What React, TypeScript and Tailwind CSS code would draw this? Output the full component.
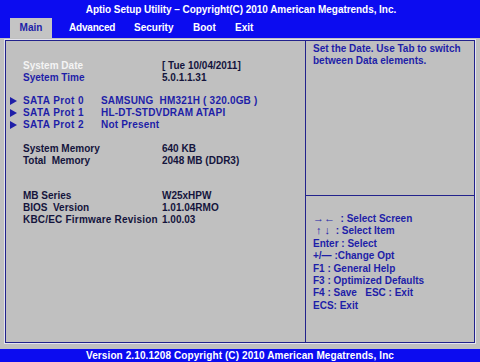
import React from "react";

const Arrow = () => (
  <svg width="7" height="8" viewBox="0 0 7 8" className="absolute left-[-13px] top-[2px]">
    <polygon points="0,0 7,4 0,8" fill="#1e1ea8" />
  </svg>
);

export default function App() {
  const font = { fontFamily: '"Liberation Sans", Arial, sans-serif' };
  const blue = "text-[#1e1ea8]";
  const dark = "text-[#14143c]";
  return (
    <div
      className="w-[480px] h-[362px] bg-[#c0c0c0] flex flex-col font-bold text-[10px] leading-[12px] overflow-hidden"
      style={font}
    >
      {/* Header */}
      <div className="h-[38px] bg-[#0c0cf0] flex flex-col text-white">
        <div className="h-[18px] flex items-center justify-center pt-[1px] text-[10px] tracking-[-0.05px] pl-[2px]">
          Aptio Setup Utility – Copyright(C) 2010 American Megatrends, Inc.
        </div>
        <div className="flex-1 flex items-stretch text-[10px]">
          <div className="ml-[10px] w-[42px] bg-[#c4c4c4] text-[#1e1ea8] flex items-center justify-center">
            Main
          </div>
          <div className="ml-[17px] w-[65px] flex items-center tracking-[-0.2px]">Advanced</div>
          <div className="w-[59px] flex items-center">Security</div>
          <div className="w-[42px] flex items-center">Boot</div>
          <div className="flex items-center">Exit</div>
        </div>
      </div>

      {/* Main area */}
      <div className="flex-1 px-[5px] pt-[2px] pb-[6px] flex">
        <div className="flex-1 flex border border-[#22228c] shadow-[0_0_0_1px_#e4e4ee]">
          {/* Left panel */}
          <div className="w-[300px] border-r border-[#22228c] pl-[17px] pt-[19px]">
            <div className="flex">
              <div className="w-[139px] text-[#f4f4f4]">System Date</div>
              <div className={dark}>[ Tue 10/04/2011]</div>
            </div>
            <div className="flex">
              <div className={`w-[139px] ${blue}`}>Syetem Time</div>
              <div className={dark}>5.0.1.1.31</div>
            </div>

            <div className="mt-[11px]">
              {[
                ["SATA Prot 0", "SAMSUNG  HM321H ( 320.0GB )"],
                ["SATA Prot 1", "HL-DT-STDVDRAM ATAPI"],
                ["SATA Prot 2", "Not Present"],
              ].map(([a, b]) => (
                <div key={a} className={`flex relative ${blue}`}>
                  <Arrow />
                  <div className="w-[78px] tracking-[0.4px]">{a}</div>
                  <div className="whitespace-pre tracking-[0.2px]">{b}</div>
                </div>
              ))}
            </div>

            <div className={`mt-[12px] ${dark}`}>
              <div className="flex">
                <div className="w-[139px]">System Memory</div>
                <div>640 KB</div>
              </div>
              <div className="flex">
                <div className="w-[139px] whitespace-pre">Total  Memory</div>
                <div>2048 MB (DDR3)</div>
              </div>
            </div>

            <div className={`mt-[23px] ${dark}`}>
              <div className="flex">
                <div className="w-[139px]">MB Series</div>
                <div>W25xHPW</div>
              </div>
              <div className="flex">
                <div className="w-[139px] whitespace-pre">BIOS  Version</div>
                <div>1.01.04RMO</div>
              </div>
              <div className="flex">
                <div className="w-[139px] tracking-[0.2px]">KBC/EC Firmware Revision</div>
                <div>1.00.03</div>
              </div>
            </div>
          </div>

          {/* Right panel */}
          <div className={`flex-1 flex flex-col ${blue}`}>
            <div className="h-[155px] border-b border-[#22228c] px-[7px] pt-[2px]">
              <div>Set the Date. Use Tab to switch</div>
              <div>between Data elements.</div>
            </div>
            <div className="px-[7px] pt-[17px] leading-[12.4px]">
              <div className="whitespace-pre"><span className="text-[11px] leading-[10px]">→←</span>{"  : Select Screen"}</div>
              <div className="whitespace-pre"><span className="text-[11px] leading-[10px]">{" ↑ ↓"}</span>{"  : Select Item"}</div>
              <div>Enter : Select</div>
              <div className="whitespace-pre">{"+/— :Change Opt"}</div>
              <div className="whitespace-pre">{"F1 : General Help"}</div>
              <div className="whitespace-pre">{"F3 : Optimized Defaults"}</div>
              <div className="whitespace-pre">{"F4 : Save   ESC : Exit"}</div>
              <div>ECS: Exit</div>
            </div>
          </div>
        </div>
      </div>

      {/* Footer */}
      <div className="h-[13px] bg-[#0c0cf0] text-white flex items-center justify-center text-[10px] tracking-[0.1px]">
        Version 2.10.1208 Copyright (C) 2010 American Megatrends, Inc
      </div>
    </div>
  );
}
